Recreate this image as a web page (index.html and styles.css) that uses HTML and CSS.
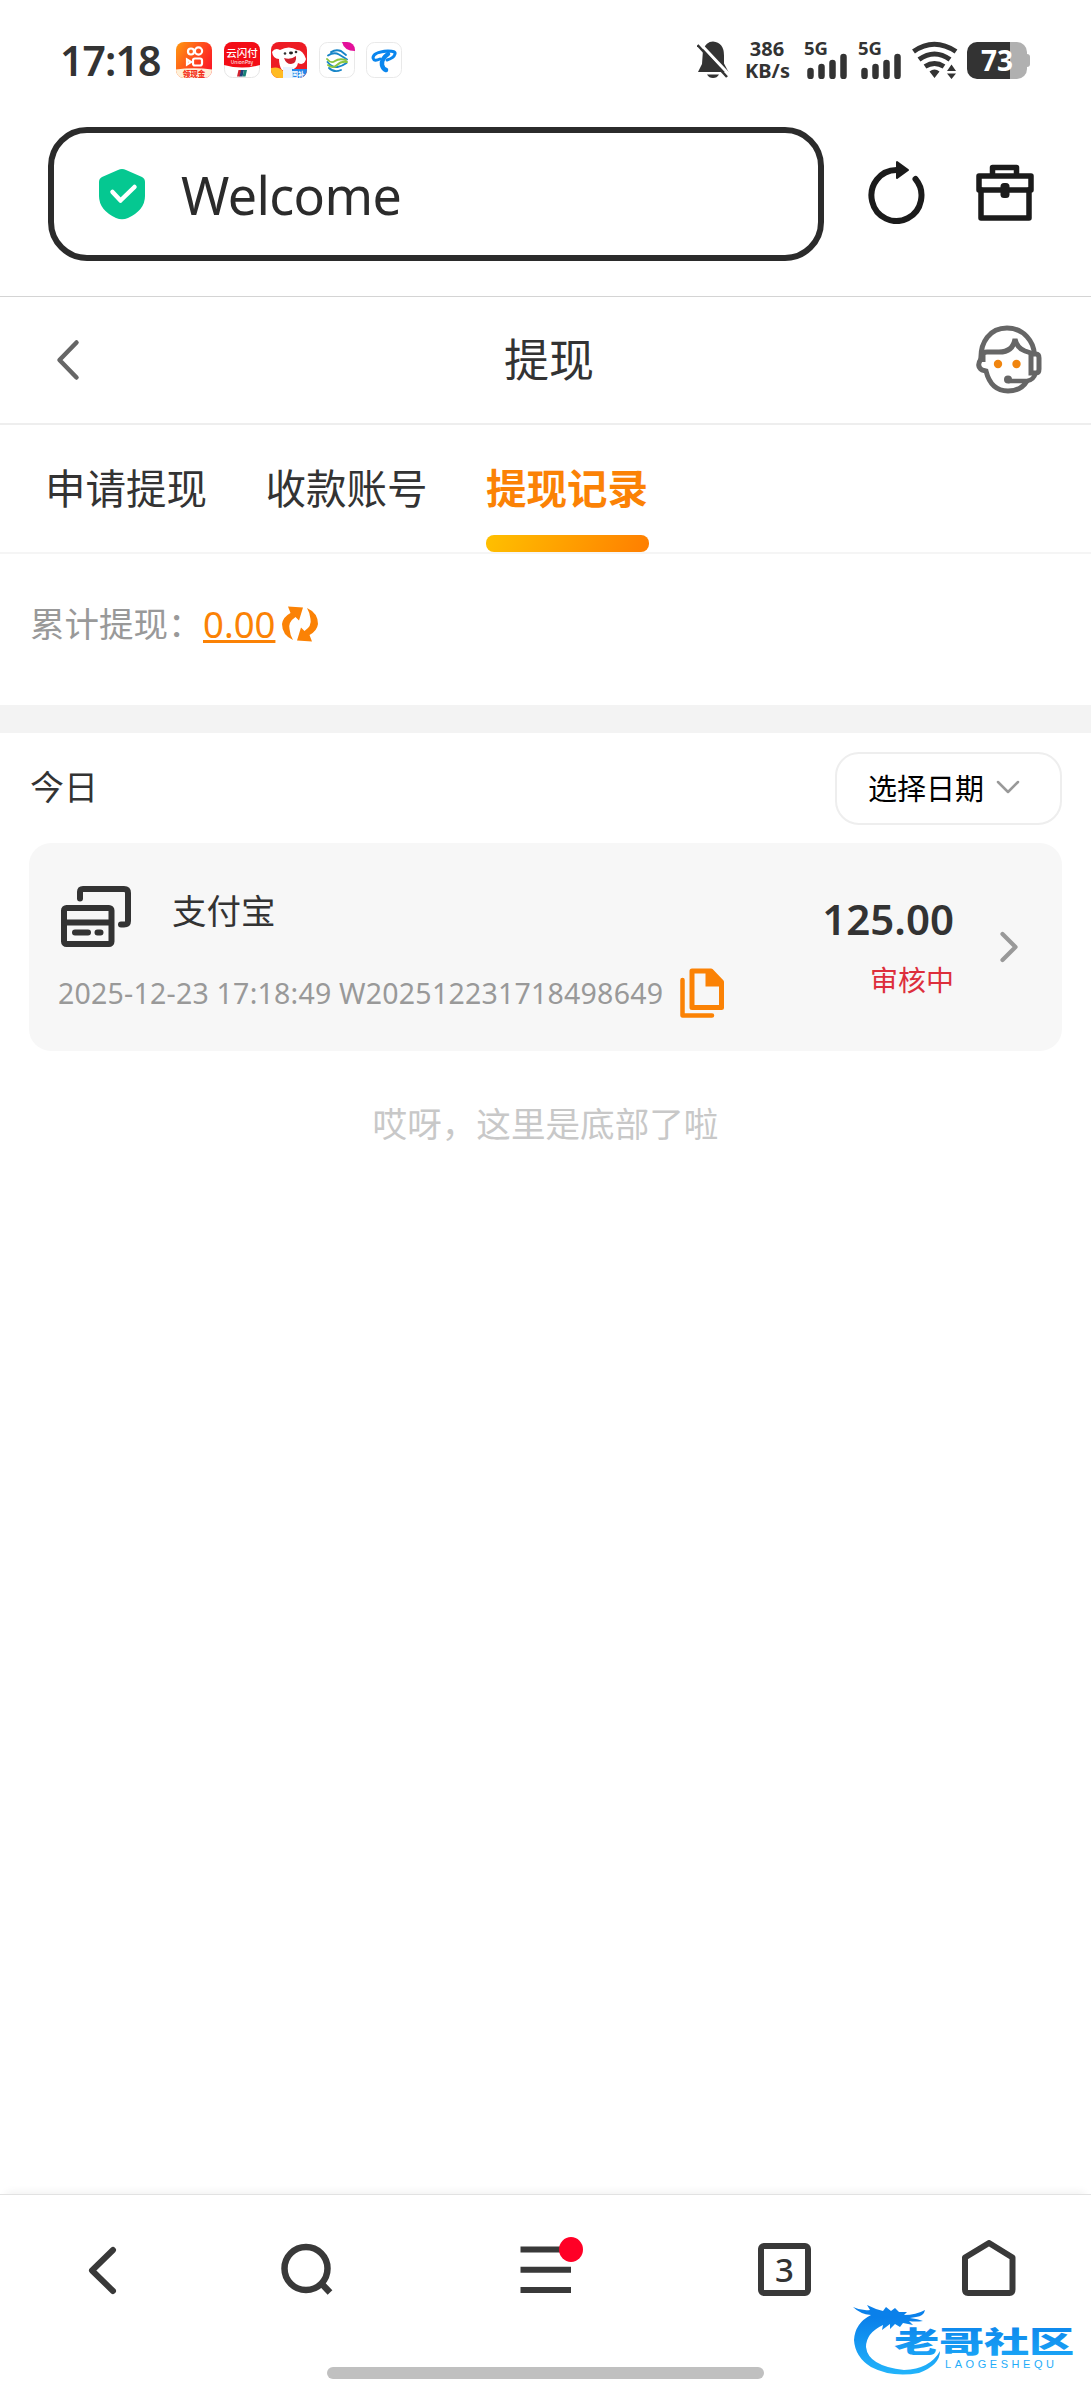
FILE: index.html
```
<!DOCTYPE html>
<html lang="zh-CN">
<head>
    <meta charset="UTF-8">
    <meta name="viewport" content="width=device-width, initial-scale=1.0">
    <title>提现</title>
    <link rel="stylesheet" href="styles.css">
</head>
<body>
    <div class="phone">
        <!-- System status bar -->
        <div class="status-bar">
            <div class="clock">17:18</div>
            <div class="notifications">
                <svg class="app-icon" viewBox="0 0 36 36">
                    <defs>
                        <linearGradient id="ks" x1="0" y1="0" x2="1" y2="0.6">
                            <stop offset="0" stop-color="#ff9a10"/>
                            <stop offset="0.6" stop-color="#ff4a1c"/>
                            <stop offset="1" stop-color="#fb1c25"/>
                        </linearGradient>
                    </defs>
                    <rect width="36" height="36" rx="8" fill="url(#ks)"/>
                    <g fill="none" stroke="#fff" stroke-width="2.2">
                        <circle cx="15" cy="9.5" r="3"/>
                        <circle cx="22.5" cy="9" r="3.600"/>
                        <rect x="17" y="16.5" width="9" height="7" rx="2"/>
                        <path d="M15 20l-4-2.5v5z"/>
                    </g>
                    <path d="M0 27.5q18-2.5 36 0v.5a8 8 0 0 1-8 8H8a8 8 0 0 1-8-8z" fill="#fff0d8"/>
                    <text x="18" y="34.5" font-size="7.5" font-weight="900" fill="#f3301c" text-anchor="middle">领现金</text>
                </svg>
                <svg class="app-icon" viewBox="0 0 36 36">
                    <rect x=".5" y=".5" width="35" height="35" rx="8" fill="#fff" stroke="#e6e6e6"/>
                    <path d="M8 0h20a8 8 0 0 1 8 8v15q-18 5-36 0V8a8 8 0 0 1 8-8z" fill="#f30d16"/>
                    <text x="18" y="15" font-size="10.5" font-weight="500" fill="#fff" text-anchor="middle">云闪付</text>
                    <text x="18" y="21.5" font-size="5" fill="#fff" text-anchor="middle">UnionPay</text>
                    <path d="M14.5 28h3l-1.500 6.500h-3z" fill="#d3212d"/>
                    <path d="M17 28h3l-1.500 6.500h-3z" fill="#1f3f78"/>
                    <path d="M20 28h3l-1.500 6.500h-3z" fill="#168277"/>
                </svg>
                <svg class="app-icon" viewBox="0 0 36 36">
                    <rect width="36" height="36" rx="8" fill="#ed1c24"/>
                    <path d="M1 10q3-5 8-2Q18 3 26 8q6 0 9 9-2 7-8 4-1 6-8 7H11q-3-4-3-11-6 0-7-7z" fill="#fff"/>
                    <circle cx="14" cy="11.500" r="1.300" fill="#333"/>
                    <circle cx="25" cy="10" r="1.300" fill="#333"/>
                    <ellipse cx="20" cy="11" rx="2" ry="1.400" fill="#222"/>
                    <path d="M13 16q7 2 12-2 1 7-5 8-5 0-7-6z" fill="#d11f2c"/>
                    <path d="M0 26q8-2 12 3v7H8a8 8 0 0 1-8-8z" fill="#ffbb24"/>
                    <path d="M12 25h10v11H12z" fill="#e9f3ff"/>
                    <path d="M21 27h15v1a8 8 0 0 1-8 8h-7z" fill="#2587e8"/>
                    <text x="27" y="34.500" font-size="6.500" font-weight="700" fill="#fff" text-anchor="middle">国补</text>
                </svg>
                <svg class="app-icon" viewBox="0 0 36 36">
                    <rect x=".5" y=".5" width="35" height="35" rx="8" fill="#fff" stroke="#e9e9e9"/>
                    <g fill="none" stroke-width="1.900" stroke-linecap="round">
                        <path d="M12 10q5-3 10-1l5 4M9 13.500q6-4 11-1t8 5" stroke="#1785c8"/>
                        <path d="M10 26q5 5 12 2M8.500 20q5 6 10 5t9-4" stroke="#1785c8"/>
                        <path d="M8 17q4 5 8 2t11-1" stroke="#8bc53f"/>
                        <path d="M9 23q5 4 9 0t10-3" stroke="#8bc53f"/>
                    </g>
                    <path d="M23 0h5a8 8 0 0 1 8 8v1q-11 0-13-9z" fill="#e4109a"/>
                </svg>
                <svg class="app-icon" viewBox="0 0 36 36">
                    <rect x=".5" y=".5" width="35" height="35" rx="8" fill="#fff" stroke="#e9e9e9"/>
                    <g fill="none" stroke="#0a86ee" stroke-linecap="round">
                        <path d="M14 17q-6 3-7-1 0-6 15-7 8 0 7 3-1 4-8 6" stroke-width="3"/>
                        <path d="M22 12q-7 5-6 11 1 4 4 5" stroke-width="4.500"/>
                    </g>
                </svg>
            </div>
            <div class="indicators">
                <svg class="bell" viewBox="0 0 33 40">
                    <path d="M6 10Q9 1.500 16 1.500q11 1 11 14v8l4.500 8.500H1l4-8z" fill="#333"/>
                    <path d="M10 34.500h12q-2 3.500-6 3.500T10 34.500z" fill="#333"/>
                    <path d="M2.500 3L34 36.500" stroke="#fff" stroke-width="3"/>
                    <path d="M.5 5L30 37" stroke="#333" stroke-width="2.500"/>
                </svg>
                <div class="net-speed">386<br>KB/s</div>
                <div class="signal">
                    <span>5G</span>
                    <svg viewBox="0 0 40 26"><path d="M3.500 18v5M14.500 14v9M25.500 10v13M36.500 4v19" stroke="#333" stroke-width="6.500" stroke-linecap="round"/></svg>
                </div>
                <div class="signal">
                    <span>5G</span>
                    <svg viewBox="0 0 40 26"><path d="M3.500 18v5M14.500 14v9M25.500 10v13M36.500 4v19" stroke="#333" stroke-width="6.500" stroke-linecap="round"/></svg>
                </div>
                <svg class="wifi" viewBox="0 0 46 38">
                    <g fill="none" stroke="#333" stroke-width="5">
                        <path d="M1.500 10.500Q22 -4 44 10.500"/>
                        <path d="M7 18.500q15.500-11 31 0"/>
                        <path d="M13 25.500q9.500-6 19 0"/>
                    </g>
                    <path d="M17.500 30.500q5-4 10 0l-5 6.500zM35 30l4.500-6.500L44 30zM35 32.500h9L39.500 38z" fill="#333"/>
                </svg>
                <div class="battery"><span>73</span></div>
            </div>
        </div>

        <!-- Browser address bar -->
        <div class="browser-bar">
            <div class="address">
                <svg class="shield" viewBox="0 0 48 52">
                    <path d="M20 2q4-2 8 0l16 7q3 1.500 3 5v14q0 14-17 22-6 2.500-12 0Q1 42 1 28V14q0-3.500 3-5z" fill="#05c891"/>
                    <path d="M14.500 24l8 8.500L36.500 19" fill="none" stroke="#fff" stroke-width="4.500" stroke-linecap="round" stroke-linejoin="round"/>
                </svg>
                <span>Welcome</span>
            </div>
            <svg class="reload" viewBox="0 0 58 64">
                <path d="M28.500 10a25 25.500 0 1 0 19 9" fill="none" stroke="#1b1b1b" stroke-width="6" stroke-linecap="round"/>
                <path d="M29 2v16l11-8z" fill="#1b1b1b" stroke="#1b1b1b" stroke-width="2" stroke-linejoin="round"/>
            </svg>
            <svg class="toolbox" viewBox="0 0 58 58">
                <g fill="none" stroke="#1b1b1b" stroke-width="5.500" stroke-linejoin="round" stroke-linecap="round">
                    <path d="M16.500 11V3.500h24V11"/>
                    <path d="M3 26V12h52v14z"/>
                    <path d="M5 26v28h48V26"/>
                </g>
                <rect x="24.500" y="19" width="9" height="15" rx="3.500" fill="#1b1b1b"/>
            </svg>
        </div>

        <!-- Page header -->
        <div class="page-header">
            <svg class="back" viewBox="0 0 24 42"><path d="M20.500 3.500L3.500 21l17 17.500" fill="none" stroke="#666" stroke-width="4.500" stroke-linecap="round" stroke-linejoin="round"/></svg>
            <h1>提现</h1>
            <svg class="service" viewBox="0 0 66 70">
                <g fill="none" stroke="#666" stroke-width="5">
                    <path d="M5 35C4 17 14 3 31 3s27 14 27.500 27"/>
                    <path d="M7 37v-7q0-3 4-3h12q14 0 16-13 2 9 10 12l9 3"/>
                    <path d="M5 34q-5 7 1 11l4 1q5 20 22 20 13 0 19-10"/>
                    <path d="M55 29h5q3 0 3 4v11q0 4-3 4h-5z"/>
                    <path d="M60 47q-2 8-9 9H32" stroke-width="4.500"/>
                </g>
                <circle cx="32" cy="54.500" r="4" fill="#666"/>
                <circle cx="22" cy="39" r="4.200" fill="#f0850f"/>
                <circle cx="40.500" cy="39" r="4.200" fill="#f0850f"/>
            </svg>
        </div>

        <div class="tabs">
            <div class="tab">申请提现</div>
            <div class="tab">收款账号</div>
            <div class="tab active">提现记录</div>
        </div>

        <div class="summary">
            <span class="summary-label">累计提现：</span>
            <span class="summary-value">0.00</span>
            <svg class="refresh" viewBox="0 0 36 38">
                <g fill="#fb8205">
                    <path d="M6 1.500l15 1-4 13-3.500-3.500Q6 17 7.500 24q.5 6 3.500 11Q0 30 0 19 1 12 8.500 8z"/>
                    <path d="M30 36.500l-15-1 4-13 3.500 3.500Q30 21 28.500 14 28 8 25 3q11 5 11 16-1 7-8.500 11z"/>
                </g>
            </svg>
        </div>

        <div class="divider"></div>

        <div class="list-head">
            <span class="day">今日</span>
            <button class="date-picker">
                选择日期
                <svg viewBox="0 0 24 14"><path d="M2 2l10 10L22 2" fill="none" stroke="#999" stroke-width="2.500" stroke-linecap="round" stroke-linejoin="round"/></svg>
            </button>
        </div>

        <div class="record">
            <div class="record-main">
                <div class="record-title">
                    <svg class="cards" viewBox="0 0 70 62">
                        <g fill="none" stroke="#333" stroke-width="6" stroke-linejoin="round" stroke-linecap="round">
                            <path d="M19 13.500V7q0-3 3-3h41q4 0 4 4v28q0 3.500-4 3.500h-3"/>
                            <rect x="3" y="23" width="47.500" height="36" rx="2.500"/>
                            <path d="M3 37.500h47"/>
                            <path d="M14 47.500h13M36.500 47.500h3"/>
                        </g>
                    </svg>
                    <span>支付宝</span>
                </div>
                <div class="record-meta">
                    <span>2025-12-23 17:18:49 W202512231718498649</span>
                    <svg class="copy" viewBox="0 0 44 50">
                        <path d="M2.500 12v35.500H32" fill="none" stroke="#fb8205" stroke-width="4.500" stroke-linecap="round" stroke-linejoin="round"/>
                        <path d="M12 3h19l10.500 11v25.500H12z" fill="none" stroke="#fb8205" stroke-width="5" stroke-linejoin="round"/>
                        <path d="M25.500 3H32l10 11v4.500H25.500z" fill="#fb8205"/>
                    </svg>
                </div>
            </div>
            <div class="record-side">
                <div class="amount">125.00</div>
                <div class="state">审核中</div>
            </div>
            <svg class="arrow" viewBox="0 0 18 32"><path d="M2.500 3l13 13-13 13" fill="none" stroke="#999" stroke-width="4.200" stroke-linecap="round" stroke-linejoin="round"/></svg>
        </div>

        <p class="list-end">哎呀，这里是底部了啦</p>

        <!-- Browser toolbar -->
        <div class="toolbar">
            <svg width="60" height="60" viewBox="0 0 60 60"><path d="M41 10L20 30.500 41 51" fill="none" stroke="#393939" stroke-width="6" stroke-linecap="round" stroke-linejoin="round"/></svg>
            <svg width="60" height="60" viewBox="0 0 60 60"><circle cx="29" cy="28.500" r="21.500" fill="none" stroke="#393939" stroke-width="6.500"/><path d="M43 42l10 10.500" stroke="#393939" stroke-width="6.500"/></svg>
            <div class="menu">
                <svg width="60" height="60" viewBox="0 0 60 60"><path d="M4.500 9.500h50.500M4.500 29.700h50.500M4.500 50h50.500" stroke="#393939" stroke-width="6"/></svg>
                <i class="dot"></i>
            </div>
            <div class="tab-count">3</div>
            <svg width="60" height="60" viewBox="0 0 60 60"><path d="M6 17.500L30 3l23.500 14.500v32q0 3.500-3 3.500H9q-3 0-3-3.500z" fill="none" stroke="#393939" stroke-width="6" stroke-linejoin="round"/></svg>
        </div>
        <div class="home-indicator"></div>

        <svg class="watermark" viewBox="0 0 224 74">
            <defs>
                <linearGradient id="wm" gradientUnits="userSpaceOnUse" x1="0" y1="0" x2="0" y2="70">
                    <stop offset="0.200" stop-color="#0a80ea"/>
                    <stop offset="1" stop-color="#22b4fb"/>
                </linearGradient>
            </defs>
            <g fill="url(#wm)">
                <path d="M1 3q8 4 17 3l-3-5 9 4 7 2 3-4 5 4 4-3 4 4 8 0-3 3q12 0 21-5-1 6-9 7l-6 1q8 1 13 3-8 1-14 0l4 4-10-2-3 4-5-3-5 5v-5l-8 6 1-5q-17 8-17 22 2 19 38 23 26-1 36-19 0 14-21 22-27 5-48-6Q3 53 2 36 3 19 19 11 8 10 1 3z"/>
                <text class="watermark-name" transform="scale(1.560 1)" x="27" y="49.500" textLength="115.500">老哥社区</text>
                <text class="watermark-sub" x="93" y="63.500" textLength="109">LAOGESHEQU</text>
            </g>
        </svg>
    </div>
</body>
</html>
```
FILE: styles.css
```
* {
    box-sizing: border-box;
}

body {
    margin: 0;
    background: #fff;
    color: #333;
    font-family: "Noto Sans", "Noto Sans CJK SC", sans-serif;
}

svg {
    display: block;
    flex-shrink: 0;
}

.phone {
    position: relative;
    display: flex;
    flex-direction: column;
    width: 1091px;
    height: 2400px;
    overflow: hidden;
}

/* status bar */
.status-bar {
    display: flex;
    align-items: center;
    height: 120px;
    padding: 0 64px 0 60px;
}

.clock {
    width: 116px;
    font-size: 41px;
    font-weight: 600;
    line-height: 50px;
    letter-spacing: -0.9px;
}

.notifications {
    display: flex;
    gap: 11.5px;
}

.app-icon {
    width: 36px;
    height: 36px;
    font-family: "Noto Sans CJK SC", sans-serif;
}

.indicators {
    display: flex;
    align-items: center;
    margin-left: auto;
}

.bell {
    width: 33px;
    height: 40px;
}

.net-speed {
    width: 44px;
    margin: 0 15px;
    font-size: 20px;
    font-weight: 700;
    line-height: 22px;
    text-align: center;
}

.signal {
    width: 43px;
    margin-right: 11px;
}

.signal span {
    display: block;
    height: 12px;
    font-size: 18.5px;
    font-weight: 700;
    line-height: 14px;
}

.signal svg {
    width: 40px;
    height: 26px;
    margin-left: 3px;
}

.wifi {
    width: 46px;
    height: 38px;
    margin-right: 9px;
}

.battery {
    position: relative;
    width: 60px;
    height: 37px;
    border-radius: 10px;
    background: linear-gradient(to right, #333 43px, #b0b0b0 43px);
    color: #fff;
    font-size: 28px;
    font-weight: 700;
    line-height: 36px;
    text-align: center;
}

.battery::after {
    content: "";
    position: absolute;
    top: 12px;
    right: -3px;
    width: 4px;
    height: 13px;
    border-radius: 0 3px 3px 0;
    background: #b0b0b0;
}

/* address bar */
.browser-bar {
    display: flex;
    height: 177px;
    padding: 7px 55px 0 48px;
    border-bottom: 1px solid #d4d4d4;
}

.address {
    display: flex;
    align-items: center;
    width: 776px;
    height: 134px;
    padding-left: 44px;
    border: 6px solid #2b2b2b;
    border-radius: 39px;
    color: #2b2b2b;
    font-size: 52px;
    letter-spacing: -0.6px;
}

.shield {
    width: 48px;
    height: 52px;
    margin-right: 35px;
}

.reload {
    width: 58px;
    height: 64px;
    margin: 33px 50px 0 44px;
}

.toolbox {
    width: 58px;
    height: 58px;
    margin-top: 37px;
}

/* page header */
.page-header {
    display: flex;
    align-items: center;
    justify-content: space-between;
    height: 128px;
    padding: 0 49px 0 56px;
    border-bottom: 2px solid #eee;
}

.back {
    width: 24px;
    height: 42px;
    margin-right: 42px;
}

.page-header h1 {
    margin: 0;
    padding-bottom: 5px;
    font-size: 45px;
    font-weight: 400;
}

.service {
    width: 66px;
    height: 70px;
}

/* tabs */
.tabs {
    display: flex;
    gap: 58.5px;
    height: 129px;
    padding-left: 45px;
    border-bottom: 2px solid #f5f5f5;
}

.tab {
    position: relative;
    height: 127px;
    font-size: 40.5px;
    line-height: 127px;
}

.tab.active {
    color: #fb8205;
    font-weight: 700;
}

.tab.active::after {
    content: "";
    position: absolute;
    left: 0;
    bottom: 0;
    width: 163px;
    height: 17px;
    border-radius: 8px;
    background: linear-gradient(110deg, #ffc000, #ff7e00);
}

/* total */
.summary {
    display: flex;
    height: 151px;
    padding: 44px 0 0 30px;
    font-size: 34.5px;
    line-height: 52px;
}

.summary-label {
    width: 173px;
    color: #999;
}

.summary-value {
    color: #fb8205;
    font-size: 36.5px;
    text-decoration: underline;
    text-decoration-thickness: 3px;
    text-underline-offset: 2px;
}

.refresh {
    width: 36px;
    height: 38px;
    margin: 7px 0 0 7px;
}

.divider {
    height: 28px;
    background: #f3f3f3;
}

/* records */
.list-head {
    display: flex;
    align-items: center;
    justify-content: space-between;
    height: 110px;
    padding: 0 29px 0 30px;
}

.day {
    padding-bottom: 5px;
    font-size: 34px;
}

.date-picker {
    display: flex;
    align-items: center;
    width: 227px;
    height: 73px;
    padding: 0 0 2px 31px;
    border: 2px solid #eee;
    border-radius: 24px;
    background: #fff;
    color: #000;
    font-family: inherit;
    font-size: 29px;
}

.date-picker svg {
    width: 24px;
    height: 14px;
    margin-left: 12px;
}

.record {
    display: flex;
    height: 208px;
    margin: 0 29px;
    border-radius: 22px;
    background: #f7f7f7;
}

.record-main {
    width: 700px;
    padding: 42px 0 0 29px;
}

.record-title {
    display: flex;
    gap: 41px;
    padding-left: 3px;
    font-size: 34.5px;
    line-height: 52px;
}

.cards {
    width: 70px;
    height: 62px;
}

.record-meta {
    display: flex;
    align-items: center;
    gap: 17px;
    height: 50px;
    margin-top: 21px;
    color: #999;
    font-size: 28.5px;
    letter-spacing: 0.22px;
    white-space: nowrap;
}

.copy {
    width: 44px;
    height: 50px;
}

.record-side {
    width: 225px;
    padding-top: 46px;
    text-align: right;
}

.amount {
    font-size: 42px;
    font-weight: 600;
    line-height: 60px;
}

.state {
    color: #dd2f3c;
    font-size: 28px;
    line-height: 63px;
}

.arrow {
    width: 18px;
    height: 32px;
    margin: 88px 0 0 46px;
}

.list-end {
    margin: 47px 0 0;
    color: #c8c8c8;
    font-size: 34.6px;
    line-height: 52px;
    text-align: center;
}

/* bottom toolbar */
.toolbar {
    display: grid;
    grid-template-columns: 204px 205px 273px 205px 204px;
    align-items: center;
    justify-items: center;
    height: 150px;
    margin-top: auto;
    border-top: 1px solid #e2e2e2;
    box-shadow: 0 -8px 8px -6px rgba(0, 0, 0, 0.06);
}

.menu {
    position: relative;
}

.dot {
    position: absolute;
    top: -3px;
    right: -7px;
    width: 24px;
    height: 25px;
    border-radius: 50%;
    background: #ff0026;
}

.tab-count {
    width: 53px;
    height: 53px;
    border: 6px solid #393939;
    border-radius: 6px;
    font-size: 33px;
    font-weight: 500;
    line-height: 41px;
    text-align: center;
}

.home-indicator {
    width: 437px;
    height: 12px;
    margin: 23px auto 21px;
    border-radius: 6px;
    background: #c0c0c0;
}

/* site mark over the toolbar */
.watermark {
    position: absolute;
    left: 852px;
    top: 2304px;
    width: 224px;
    height: 74px;
}

.watermark-name {
    font-family: "Noto Sans CJK SC", sans-serif;
    font-size: 29px;
    font-weight: 900;
}

.watermark-sub {
    font-family: "Liberation Sans", sans-serif;
    font-size: 11px;
}
```
